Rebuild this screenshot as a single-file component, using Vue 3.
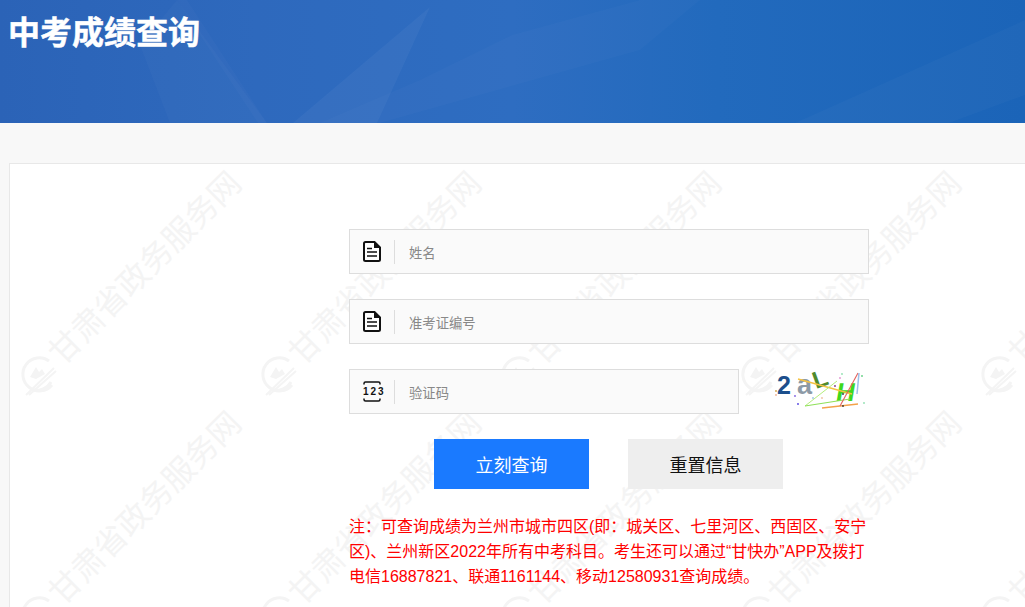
<script setup>
const tiles = Array.from({ length: 15 }, (_, i) => i)
const fields = [
  { ph: '姓名', icon: 'doc', cls: 'full' },
  { ph: '准考证编号', icon: 'doc', cls: 'full' },
]
</script>

<template>
  <div class="page">
    <header class="banner">
      <svg class="banner-art" viewBox="0 0 1025 123" preserveAspectRatio="none" aria-hidden="true">
        <polygon points="177,0 187,0 267,123 258,123" fill="#ffffff" opacity="0.02" />
        <polygon points="140,45 177,0 267,123 170,123" fill="#ffffff" opacity="0.025" />
        <polygon points="293,123 430,7 377,123" fill="#ffffff" opacity="0.04" />
        <polygon points="320,123 420,80 512,35 640,0 700,0 640,50 380,123" fill="#ffffff" opacity="0.02" />
        <polygon points="795,123 1025,20 1025,95 949,123" fill="#ffffff" opacity="0.025" />
      </svg>
      <h1 class="title">中考成绩查询</h1>
    </header>

    <main class="card">
      <div class="watermarks" aria-hidden="true">
        <div v-for="t in tiles" :key="t" class="tile">
          <svg class="wm-logo" viewBox="0 0 40 44">
            <path d="M30 7 A16.5 16.5 0 1 0 33 31" fill="none" stroke="#f4f4f4" stroke-width="3" />
            <path d="M32 28 A16.5 16.5 0 0 1 14 36" fill="none" stroke="#f4f4f4" stroke-width="3" />
            <path d="M11 23 L17 13 L20 18 L23 15 L26 20 L17 25 Z" fill="#f4f4f4" />
            <path d="M7 41 L35 14 M10 41 L37 17" stroke="#f4f4f4" stroke-width="2" fill="none" />
          </svg>
          <span class="wm-text">甘肃省政务服务网</span>
        </div>
      </div>

      <form class="form" @submit.prevent>
        <div v-for="f in fields" :key="f.ph" class="row">
          <div class="field">
            <svg class="icon" viewBox="0 0 18 21" aria-hidden="true">
              <path d="M2.5 1 H11.5 L17 6.5 V18.5 A1.5 1.5 0 0 1 15.5 20 H2.5 A1.5 1.5 0 0 1 1 18.5 V2.5 A1.5 1.5 0 0 1 2.5 1 Z" fill="#fff" stroke="#111" stroke-width="2" />
              <path d="M11 1 V7 H17 Z" fill="#111" />
              <path d="M4 7.5 H9 M4 11 H14 M4 15 H14" stroke="#111" stroke-width="1.7" fill="none" />
            </svg>
            <span class="sep"></span>
            <input class="input" type="text" :placeholder="f.ph" />
          </div>
        </div>

        <div class="row captcha-row">
          <div class="field short">
            <span class="icon num-icon">
              <svg viewBox="0 0 18 21" aria-hidden="true">
                <path d="M1 3.5 V2.5 A1.5 1.5 0 0 1 2.5 1 H15.5 A1.5 1.5 0 0 1 17 2.5 V3.5 M1 17.5 V18.5 A1.5 1.5 0 0 0 2.5 20 H15.5 A1.5 1.5 0 0 0 17 18.5 V17.5" fill="none" stroke="#111" stroke-width="1.5" />
              </svg>
              <b class="num">123</b>
            </span>
            <span class="sep"></span>
            <input class="input" type="text" placeholder="验证码" />
          </div>
          <svg class="captcha" viewBox="0 0 96 40" aria-label="验证码图片">
            <text x="5" y="25" class="c-two">2</text>
            <text x="25" y="25" class="c-a">a</text>
            <text x="0" y="0" class="c-l" transform="translate(44,20) rotate(-20)">L</text>
            <text x="0" y="0" class="c-h" transform="translate(63,32) skewX(-10)">H</text>
            <line x1="26" y1="10" x2="80" y2="25" stroke="#f5c242" stroke-width="1.5" />
            <line x1="33" y1="37" x2="65" y2="12" stroke="#b4ee7a" stroke-width="1" />
            <line x1="33" y1="37" x2="78" y2="30" stroke="#8fe05a" stroke-width="1.2" />
            <line x1="50" y1="39" x2="86" y2="35" stroke="#f3a24a" stroke-width="1.5" />
            <line x1="68" y1="37" x2="86" y2="4" stroke="#e4605c" stroke-width="1.1" />
            <line x1="87" y1="4" x2="85" y2="25" stroke="#9cc0ea" stroke-width="1.5" />
            <circle cx="4" cy="22" r="0.9" fill="#d0a040" />
            <circle cx="4" cy="26" r="0.9" fill="#f0b090" />
            <circle cx="23" cy="27" r="0.9" fill="#8060e0" />
            <circle cx="26" cy="35" r="0.9" fill="#5040e0" />
            <circle cx="41" cy="29" r="0.9" fill="#9cc0ea" />
            <circle cx="50" cy="29" r="0.9" fill="#f0c0a0" />
            <circle cx="63" cy="17" r="0.9" fill="#803080" />
            <circle cx="68" cy="9" r="0.9" fill="#e090d0" />
            <circle cx="70" cy="5" r="0.9" fill="#8fe0b0" />
            <circle cx="90" cy="7" r="0.9" fill="#60d080" />
            <circle cx="92" cy="34" r="0.9" fill="#90e0b0" />
            <circle cx="71" cy="25" r="0.9" fill="#333" />
            <circle cx="71" cy="37" r="0.9" fill="#333" />
          </svg>
        </div>

        <div class="actions">
          <button class="btn primary" type="submit">立刻查询</button>
          <button class="btn" type="reset">重置信息</button>
        </div>

        <p class="note">注：可查询成绩为兰州市城市四区(即：城关区、七里河区、西固区、安宁区)、兰州新区2022年所有中考科目。考生还可以通过“甘快办”APP及拨打电信16887821、联通1161144、移动12580931查询成绩。</p>
      </form>
    </main>
  </div>
</template>

<style>
html, body { margin: 0; overflow: hidden; background: #f8f8f8; }
</style>

<style scoped>
.page {
  height: 607px;
  overflow: hidden;
  background: #f8f8f8;
  font-family: "Liberation Sans", "Noto Sans CJK SC", sans-serif;
}
.banner {
  position: relative;
  height: 123px;
  background: linear-gradient(90deg, #2b63b7 0%, #2e69bd 25%, #2e6dc1 50%, #226abd 70%, #1b64b8 100%);
  overflow: hidden;
}
.banner-art { position: absolute; inset: 0; width: 100%; height: 100%; }
.title {
  position: relative;
  margin: 0;
  padding: 10px 0 0 8px;
  font-size: 32px;
  line-height: 46px;
  font-weight: 700;
  color: #fff;
  -webkit-text-stroke: 0.5px #fff;
}
.card {
  position: relative;
  box-sizing: border-box;
  width: 1100px;
  height: 520px;
  margin: 40px 0 0 9px;
  padding: 65px 0 0 339px;
  background: #fff;
  border: 1px solid #e8e8e8;
}
.watermarks {
  position: absolute;
  inset: 0;
  display: grid;
  grid-template-columns: repeat(5, 240px);
  grid-auto-rows: 240px;
  overflow: hidden;
}
.tile { position: relative; width: 240px; height: 240px; }
.wm-logo {
  position: absolute;
  left: 9px;
  top: 190px;
  width: 40px;
  height: 44px;
}
.wm-text {
  position: absolute;
  left: 135px;
  top: 104px;
  transform: translate(-50%, -50%) rotate(-45deg);
  white-space: nowrap;
  font-size: 32px;
  line-height: 32px;
  color: #f4f4f4;
}
.form { position: relative; width: 520px; }
.row { margin-bottom: 25px; }
.captcha-row { display: flex; align-items: flex-start; }
.field {
  box-sizing: border-box;
  display: flex;
  align-items: center;
  height: 45px;
  background: #fafafa;
  border: 1px solid #dddddd;
  padding-left: 13px;
}
.short { width: 390px; }
.icon { display: block; width: 18px; height: 21px; flex: none; }
.num-icon { position: relative; }
.num-icon svg { display: block; width: 18px; height: 21px; }
.num {
  position: absolute;
  left: 0;
  right: -2px;
  top: 3px;
  text-align: center;
  font-size: 10px;
  line-height: 15px;
  letter-spacing: 2px;
  color: #111;
}
.sep { width: 1px; height: 24px; margin: 0 14px 0 13px; background: #dddddd; flex: none; }
.input {
  flex: 1;
  min-width: 0;
  border: 0;
  outline: 0;
  padding: 4px 0 0;
  background: transparent;
  font-family: inherit;
  font-size: 13.33px;
  color: #333;
}
.input::placeholder { color: #888; opacity: 1; }
.captcha { width: 96px; height: 40px; margin: 0 0 0 33px; flex: none; }
.c-two { font-size: 25px; font-weight: 700; fill: #1c4f8c; font-family: "Liberation Sans", sans-serif; }
.c-a { font-size: 27px; font-weight: 700; fill: #8d9aa6; font-family: "Liberation Sans", sans-serif; }
.c-l { font-size: 24px; font-weight: 700; fill: #4f8a2c; font-family: "Liberation Sans", sans-serif; }
.c-h { font-size: 26px; font-weight: 700; fill: #3fd81c; font-family: "Liberation Sans", sans-serif; }
.actions { display: flex; gap: 39px; padding-left: 85px; }
.btn {
  width: 155px;
  height: 50px;
  border: 0;
  padding: 0;
  background: #eeeeee;
  color: #111;
  font-family: inherit;
  font-size: 18px;
}
.primary { background: #1a7aff; color: #fff; }
.note {
  margin: 25px 0 0;
  width: 520px;
  font-size: 16px;
  line-height: 25px;
  color: #ff0000;
}
</style>
